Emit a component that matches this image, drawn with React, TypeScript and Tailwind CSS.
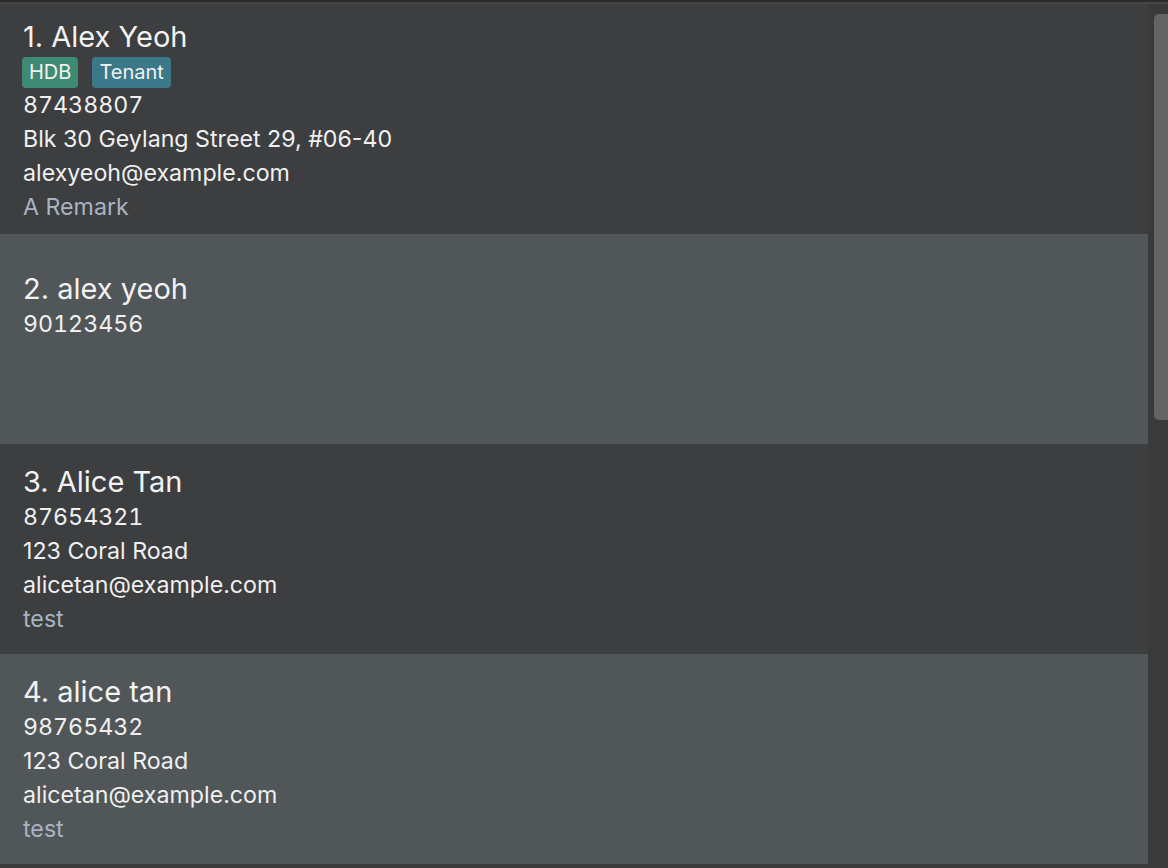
import React from "react";

interface Person {
  name: string;
  phone: string;
  address?: string;
  email?: string;
  remark?: string;
  tags?: { label: string; color: string }[];
}

const people: Person[] = [
  {
    name: "Alex Yeoh",
    phone: "87438807",
    address: "Blk 30 Geylang Street 29, #06-40",
    email: "alexyeoh@example.com",
    remark: "A Remark",
    tags: [
      { label: "HDB", color: "bg-[#3e8a72]" },
      { label: "Tenant", color: "bg-[#3b788a]" },
    ],
  },
  { name: "alex yeoh", phone: "90123456" },
  {
    name: "Alice Tan",
    phone: "87654321",
    address: "123 Coral Road",
    email: "alicetan@example.com",
    remark: "test",
  },
  {
    name: "alice tan",
    phone: "98765432",
    address: "123 Coral Road",
    email: "alicetan@example.com",
    remark: "test",
  },
];

// per-row sizing, the list cells are fixed height
const rowStyles = [
  "h-[230px] pt-[15px] bg-[#3c3e40]",
  "h-[210px] pt-[37px] bg-[#515658]",
  "h-[210px] pt-[20px] bg-[#3c3e40]",
  "h-[210px] pt-[20px] bg-[#515658]",
];

function PersonCard({ person, index }: { person: Person; index: number }) {
  return (
    <div className={`pl-[23px] ${rowStyles[index]}`}>
      <div className="text-[29px] leading-[36px] text-[#f2f2f2]">
        {index + 1}. {person.name}
      </div>
      {person.tags && (
        <div className="flex gap-[14px] mt-[2px] ml-[-1px]">
          {person.tags.map((t) => (
            <span
              key={t.label}
              className={`${t.color} h-[31px] px-[7px] rounded-[4px] text-[20px] leading-[31px] text-[#f0f0f0]`}
            >
              {t.label}
            </span>
          ))}
        </div>
      )}
      <div className="text-[23.2px] leading-[34px] text-[#f0f0f0]">
        <div className="tabular-nums">{person.phone}</div>
        {person.address && <div>{person.address}</div>}
        {person.email && <div>{person.email}</div>}
        {person.remark && <div className="text-[#a9b4c2]">{person.remark}</div>}
      </div>
    </div>
  );
}

export default function App() {
  return (
    <div
      className="w-[1168px] h-[868px] overflow-hidden bg-[#3a3a3a]"
      style={{ fontFamily: "Inter, 'Open Sans', sans-serif" }}
    >
      <div className="h-[2px] bg-[#2c2c2c]" />
      <div className="h-[2px] bg-[#454545]" />
      <div className="flex">
        <div className="w-[1148px] flex flex-col">
          {people.map((p, i) => (
            <PersonCard key={i} person={p} index={i} />
          ))}
        </div>
        {/* scrollbar */}
        <div className="w-[20px] h-[860px] bg-[#3a3a3a] pl-[6px] pt-[10px]">
          <div className="w-[14px] h-[406px] bg-[#646464] rounded-l-[5px]" />
        </div>
      </div>
    </div>
  );
}
